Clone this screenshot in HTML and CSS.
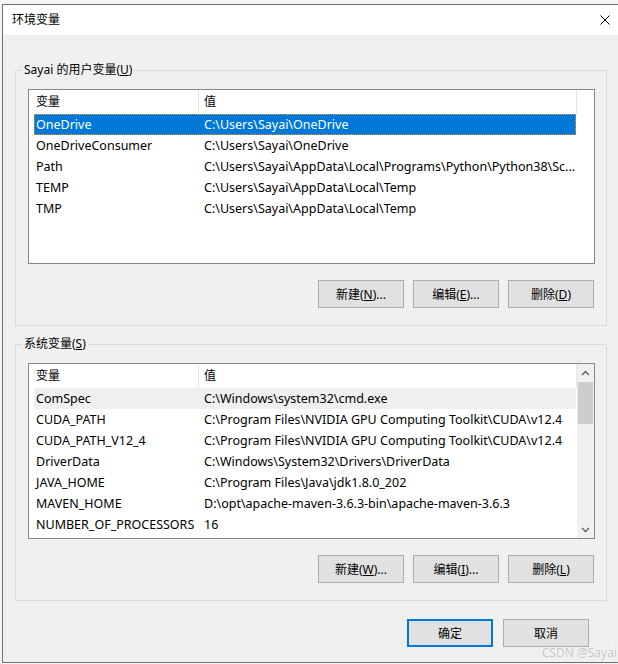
FILE: index.html
```html
<!DOCTYPE html>
<html lang="zh-CN">
<head>
	<meta charset="UTF-8">
	<title>环境变量</title>
	<link rel="stylesheet" href="styles.css">
</head>
<body>
	<div id="dialog">
		<div class="titlebar">
			<span class="title">环境变量</span>
			<span class="close">
				<svg viewBox="0 0 10 10"><path d="M0.5 0.5L9.5 9.5M9.5 0.5L0.5 9.5" stroke="#000" stroke-width="1" fill="none"/></svg>
			</span>
		</div>
		<div class="content">
			<!-- 用户变量 -->
			<fieldset class="group">
				<legend>Sayai 的用户变量(<u>U</u>)</legend>
				<div class="list">
					<div class="lv-head"><span>变量</span><span>值</span></div>
					<div class="lv-row selected"><span>OneDrive</span><span>C:\Users\Sayai\OneDrive</span></div>
					<div class="lv-row"><span>OneDriveConsumer</span><span>C:\Users\Sayai\OneDrive</span></div>
					<div class="lv-row"><span>Path</span><span>C:\Users\Sayai\AppData\Local\Programs\Python\Python38\Sc...</span></div>
					<div class="lv-row"><span>TEMP</span><span>C:\Users\Sayai\AppData\Local\Temp</span></div>
					<div class="lv-row"><span>TMP</span><span>C:\Users\Sayai\AppData\Local\Temp</span></div>
				</div>
				<div class="btns">
					<button>新建(<u>N</u>)...</button>
					<button>编辑(<u>E</u>)...</button>
					<button>删除(<u>D</u>)</button>
				</div>
			</fieldset>
			<!-- 系统变量 -->
			<fieldset class="group">
				<legend>系统变量(<u>S</u>)</legend>
				<div class="list scroll">
					<div class="lv-body">
						<div class="lv-head"><span>变量</span><span>值</span></div>
						<div class="lv-row hot"><span>ComSpec</span><span>C:\Windows\system32\cmd.exe</span></div>
						<div class="lv-row"><span>CUDA_PATH</span><span>C:\Program Files\NVIDIA GPU Computing Toolkit\CUDA\v12.4</span></div>
						<div class="lv-row"><span>CUDA_PATH_V12_4</span><span>C:\Program Files\NVIDIA GPU Computing Toolkit\CUDA\v12.4</span></div>
						<div class="lv-row"><span>DriverData</span><span>C:\Windows\System32\Drivers\DriverData</span></div>
						<div class="lv-row"><span>JAVA_HOME</span><span>C:\Program Files\Java\jdk1.8.0_202</span></div>
						<div class="lv-row"><span>MAVEN_HOME</span><span>D:\opt\apache-maven-3.6.3-bin\apache-maven-3.6.3</span></div>
						<div class="lv-row"><span>NUMBER_OF_PROCESSORS</span><span>16</span></div>
					</div>
					<div class="vscroll">
						<div class="arrow"><svg viewBox="0 0 9 6"><polyline points="1,5 4.5,1.5 8,5" fill="none" stroke="#606060" stroke-width="1.3"/></svg></div>
						<div class="track"><div class="thumb"></div></div>
						<div class="arrow"><svg viewBox="0 0 9 6"><polyline points="1,1 4.5,4.5 8,1" fill="none" stroke="#606060" stroke-width="1.3"/></svg></div>
					</div>
				</div>
				<div class="btns">
					<button>新建(<u>W</u>)...</button>
					<button>编辑(<u>I</u>)...</button>
					<button>删除(<u>L</u>)</button>
				</div>
			</fieldset>
			<div class="footer">
				<button class="default">确定</button>
				<button>取消</button>
			</div>
		</div>
	</div>
	<div class="mark">CSDN @Sayai</div>
</body>
</html>
```

FILE: styles.css
```css
*{
	margin: 0;
	padding: 0;
}
html{
	overflow: hidden;
	background-color: #f4f4f4;
}
body{
	position: relative;
	height: 664px;
	font-family: "Noto Sans", "Noto Sans CJK SC", sans-serif;
	font-size: 12px;
	color: #000;
}
#dialog{
	width: 618px;
	height: 659px;
	margin: 4px 0 0 2px;
	border: 1px solid #707070;
	background-color: #f0f0f0;
	box-sizing: border-box;
}
.titlebar{
	height: 30px;
	background-color: #fff;
	display: flex;
	align-items: center;
	justify-content: space-between;
	padding: 0 9px;
}
.title{
	line-height: 16px;
}
.close svg{
	display: block;
	width: 10px;
	height: 10px;
}
.content{
	padding-top: 27px;
}
.group{
	margin: 0 12px;
	padding: 11px 11px 17px 12px;
	border: 1px solid #dcdcdc;
	min-width: 0;
}
.group + .group{
	margin-top: 10px;
}
.group legend{
	margin-left: -6px;
	padding: 0 2px;
	line-height: 16px;
}
/* 列表 */
.list{
	height: 175px;
	box-sizing: border-box;
	border: 1px solid #828790;
	background-color: #fff;
	overflow: hidden;
}
.list.scroll{
	display: flex;
	height: 176px;
}
.lv-body{
	width: 548px;
	overflow: hidden;
}
.lv-head{
	display: grid;
	grid-template-columns: 170px 378px;
	height: 24px;
	line-height: 24px;
}
.lv-head span{
	border-right: 1px solid #e5e5e5;
	padding-left: 7px;
}
.lv-head span + span{
	padding-left: 5px;
}
.lv-row{
	display: grid;
	grid-template-columns: 165px 377px;
	width: 542px;
	margin-left: 5px;
	height: 21px;
	line-height: 21px;
	font-size: 12.5px;
}
.lv-row span{
	padding-left: 2px;
	white-space: nowrap;
	overflow: hidden;
	text-overflow: ellipsis;
}
.lv-row span + span{
	padding-left: 5px;
}
.lv-row.selected{
	background-color: #0078d7;
	color: #fff;
	outline: 1px dotted #f0932b;
	outline-offset: -1px;
}
.lv-row.hot{
	background-color: #efefef;
}
/* 滚动条 */
.vscroll{
	width: 17px;
	background-color: #f0f0f0;
	display: flex;
	flex-direction: column;
}
.vscroll .arrow{
	height: 17px;
	display: flex;
	align-items: center;
	justify-content: center;
}
.vscroll .arrow svg{
	width: 9px;
	height: 6px;
}
.vscroll .track{
	flex: 1;
	padding: 1px 1px 0;
}
.vscroll .thumb{
	height: 42px;
	background-color: #cdcdcd;
}
/* 按钮 */
button{
	width: 86px;
	height: 28px;
	box-sizing: border-box;
	font: inherit;
	color: #000;
	background-color: #e1e1e1;
	border: 1px solid #adadad;
}
.btns{
	display: flex;
	justify-content: flex-end;
	gap: 9px;
	margin-top: 16px;
	padding-right: 1px;
}
.footer{
	display: flex;
	justify-content: flex-end;
	gap: 10px;
	margin-top: 18px;
	padding-right: 30px;
}
button.default{
	border: 2px solid #0078d7;
}
.mark{
	position: absolute;
	right: 1px;
	bottom: 3px;
	line-height: 16px;
	color: #c4c4c4;
	text-shadow: 0 0 1px #fff, 0 0 1px #fff;
}
```
